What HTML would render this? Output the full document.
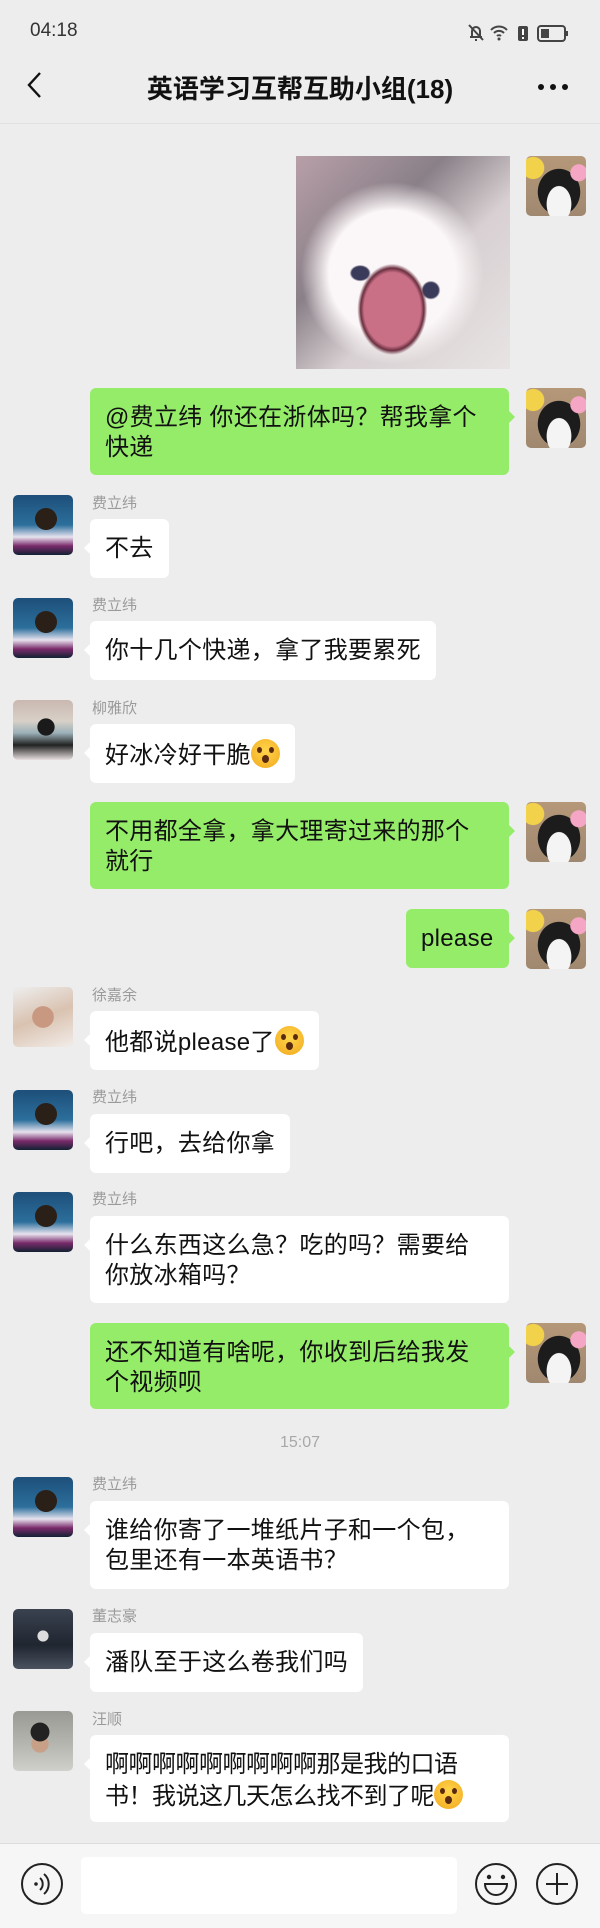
<!DOCTYPE html>
<html><head><meta charset="utf-8"><style>
*{margin:0;padding:0;box-sizing:border-box}
body{width:600px;height:1928px;background:#ededed;position:relative;overflow:hidden;font-family:"Liberation Sans","Noto Sans CJK SC",sans-serif;color:#111}
.a{position:absolute;width:60px;height:60px;border-radius:5px;overflow:hidden}
.L{left:13px}.R{left:526px}
.fei{background:radial-gradient(circle at 55% 40%,#2a2018 0 22%,transparent 23%),linear-gradient(180deg,#1d4f7a 0%,#2c6f9c 50%,#e7e2ee 70%,#7a2a6a 85%,#123 100%)}
.liu{background:radial-gradient(circle at 55% 45%,#1a1a1a 0 18%,transparent 19%),linear-gradient(180deg,#c9b8b0 0%,#d8d0c8 35%,#9bb0b8 55%,#222 75%,#e8e0e0 100%)}
.xu{background:radial-gradient(circle at 50% 50%,#c89880 0 25%,transparent 26%),linear-gradient(160deg,#eee 0%,#d9c2b0 50%,#f2ece8 100%)}
.dong{background:radial-gradient(circle at 50% 45%,#ddd 0 12%,transparent 13%),linear-gradient(180deg,#3a4250 0%,#202630 60%,#4a5260 100%)}
.wang{background:radial-gradient(circle at 45% 35%,#222 0 18%,transparent 19%),radial-gradient(circle at 45% 55%,#c8a088 0 18%,transparent 19%),linear-gradient(180deg,#9a9a94 0%,#b8b8b2 60%,#d0d0cc 100%)}
.cat{background:radial-gradient(circle at 88% 28%,#f4a6c4 0 12%,transparent 13%),radial-gradient(circle at 12% 20%,#f2d24a 0 15%,transparent 16%),radial-gradient(ellipse at 55% 80%,#f4f4f4 0 26%,transparent 27%),radial-gradient(ellipse at 55% 60%,#1c1c1c 0 45%,transparent 46%),linear-gradient(180deg,#b59878,#a08870)}
.n{position:absolute;left:92px;font-size:15px;color:#9a9a9a;line-height:18px}
.b{position:absolute;font-size:24px;line-height:30px;padding:15px 15px 14px;border-radius:6px;background:#fff;white-space:nowrap;letter-spacing:0.3px}
.b.g{background:#95ec69}
.b::before{content:"";position:absolute;top:22px;width:0;height:0;border:7px solid transparent}
.b.w::before{left:-13px;border-right-color:#fff}
.b.g::before{right:-13px;border-left-color:#95ec69}
.e{display:inline-block;width:29px;height:29px;border-radius:50%;background:radial-gradient(circle at 50% 40%,#ffd54a,#f2a81e);vertical-align:-5px;position:relative}
.e::after{content:"";position:absolute;left:11px;top:16px;width:7px;height:8px;border-radius:50%;background:#5a2a10}
.e::before{content:"";position:absolute;left:6px;top:8px;width:5px;height:6px;border-radius:50%;background:#5a2a10;box-shadow:12px 0 0 #5a2a10}
</style></head><body>
<div style="position:absolute;left:30px;top:20px;font-size:19px;color:#333">04:18</div>
<svg style="position:absolute;left:466px;top:22px" width="110" height="22" viewBox="0 0 110 22">
<path d="M4 15h12M6 15V9a4 4 0 018 0v6M10 17v2" stroke="#444" stroke-width="2" fill="none"/><path d="M3 3l14 15" stroke="#444" stroke-width="2"/>
<path d="M25 8a11 11 0 0116 0M28 11a7 7 0 0110 0M31 14a3 3 0 014 0" stroke="#444" stroke-width="2" fill="none"/><circle cx="33" cy="17" r="1.5" fill="#444"/>
<rect x="52" y="4" width="10" height="15" rx="2" fill="#444"/><rect x="56" y="7" width="2" height="6" fill="#fff"/><rect x="56" y="15" width="2" height="2" fill="#fff"/>
<rect x="72" y="4" width="27" height="15" rx="3" fill="none" stroke="#444" stroke-width="2"/><rect x="75" y="7" width="8" height="9" fill="#444"/><rect x="100" y="9" width="2" height="5" fill="#444"/>
</svg>
<svg style="position:absolute;left:24px;top:70px" width="20" height="30"><path d="M16 3L5 15l11 12" stroke="#111" stroke-width="2.4" fill="none"/></svg>
<div style="position:absolute;left:0;width:600px;top:69px;text-align:center;font-size:26px;font-weight:bold;color:#111">英语学习互帮互助小组(18)</div>
<div style="position:absolute;left:538px;top:84px;width:6px;height:6px;border-radius:50%;background:#111;box-shadow:12px 0 0 #111,24px 0 0 #111"></div>
<div style="position:absolute;left:0;top:123px;width:600px;height:1px;background:#e2e2e2"></div>

<div style="position:absolute;left:296px;top:156px;width:214px;height:213px;background:radial-gradient(ellipse at 45% 72%,#c96f86 0 17%,#6a3040 19%,transparent 21%),radial-gradient(ellipse at 30% 55%,#3a3a5a 0 4%,transparent 5%),radial-gradient(ellipse at 63% 63%,#3a3a5a 0 4%,transparent 5%),radial-gradient(ellipse at 45% 55%,#fbf6f7 0 38%,transparent 55%),linear-gradient(135deg,#b89fa8 0%,#8a8088 35%,#d8d0d2 60%,#e8e4e4 100%)"></div>
<div class="a R cat" style="top:156px"></div>

<div class="b g" style="left:90px;top:388px;width:419px;height:87px">@费立纬 你还在浙体吗？帮我拿个<br>快递</div>
<div class="a R cat" style="top:388px"></div>

<div class="a L fei" style="top:495px"></div><div class="n" style="top:495px">费立纬</div>
<div class="b w" style="left:90px;top:519px;height:59px">不去</div>

<div class="a L fei" style="top:598px"></div><div class="n" style="top:597px">费立纬</div>
<div class="b w" style="left:90px;top:621px;height:59px">你十几个快递，拿了我要累死</div>

<div class="a L liu" style="top:700px"></div><div class="n" style="top:700px">柳雅欣</div>
<div class="b w" style="left:90px;top:724px;height:59px">好冰冷好干脆<span class="e"></span></div>

<div class="b g" style="left:90px;top:802px;width:419px;height:87px">不用都全拿，拿大理寄过来的那个<br>就行</div>
<div class="a R cat" style="top:802px"></div>

<div class="b g" style="left:406px;top:909px;width:103px;height:59px">please</div>
<div class="a R cat" style="top:909px"></div>

<div class="a L xu" style="top:987px"></div><div class="n" style="top:987px">徐嘉余</div>
<div class="b w" style="left:90px;top:1011px;height:59px">他都说please了<span class="e"></span></div>

<div class="a L fei" style="top:1090px"></div><div class="n" style="top:1089px">费立纬</div>
<div class="b w" style="left:90px;top:1114px;height:59px">行吧，去给你拿</div>

<div class="a L fei" style="top:1192px"></div><div class="n" style="top:1191px">费立纬</div>
<div class="b w" style="left:90px;top:1216px;width:419px;height:87px">什么东西这么急？吃的吗？需要给<br>你放冰箱吗？</div>

<div class="b g" style="left:90px;top:1323px;width:419px;height:86px">还不知道有啥呢，你收到后给我发<br>个视频呗</div>
<div class="a R cat" style="top:1323px"></div>

<div style="position:absolute;left:0;width:600px;top:1434px;text-align:center;font-size:16px;color:#a8a8a8">15:07</div>

<div class="a L fei" style="top:1477px"></div><div class="n" style="top:1476px">费立纬</div>
<div class="b w" style="left:90px;top:1501px;width:419px;height:88px">谁给你寄了一堆纸片子和一个包，<br>包里还有一本英语书？</div>

<div class="a L dong" style="top:1609px"></div><div class="n" style="top:1608px">董志豪</div>
<div class="b w" style="left:90px;top:1633px;height:59px">潘队至于这么卷我们吗</div>

<div class="a L wang" style="top:1711px"></div><div class="n" style="top:1711px">汪顺</div>
<div class="b w" style="left:90px;top:1735px;width:419px;height:87px;letter-spacing:-0.5px">啊啊啊啊啊啊啊啊啊那是我的口语<br>书！我说这几天怎么找不到了呢<span class="e"></span></div>

<div style="position:absolute;left:0;top:1843px;width:600px;height:85px;background:#f6f6f6;border-top:1px solid #dcdcdc"></div>
<div style="position:absolute;left:81px;top:1857px;width:376px;height:57px;background:#fff;border-radius:5px"></div>
<svg style="position:absolute;left:0;top:1860px" width="600" height="50">
<circle cx="42" cy="24" r="20" stroke="#222" stroke-width="2" fill="none"/>
<circle cx="36" cy="24" r="1.8" fill="#222"/><path d="M40 18a8 8 0 010 12M44 14a13 13 0 010 20" stroke="#222" stroke-width="2" fill="none"/>
<circle cx="496" cy="24" r="20" stroke="#222" stroke-width="2" fill="none"/>
<circle cx="489" cy="17" r="2.2" fill="#222"/><circle cx="503" cy="17" r="2.2" fill="#222"/>
<path d="M485 24h22a11 11 0 01-22 0z" stroke="#222" stroke-width="2" fill="none"/>
<circle cx="557" cy="24" r="20" stroke="#222" stroke-width="2" fill="none"/>
<path d="M557 13v22M546 24h22" stroke="#222" stroke-width="2"/>
</svg>
</body></html>
